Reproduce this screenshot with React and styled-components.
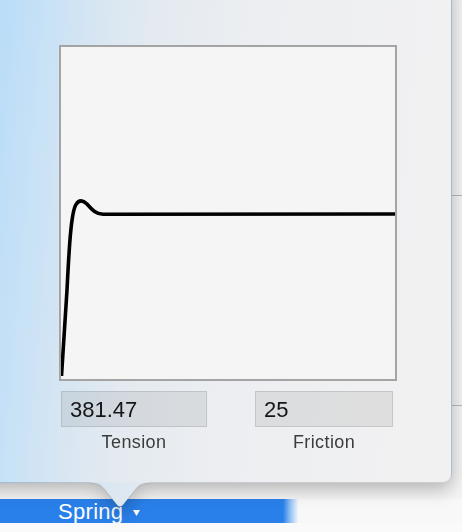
import React from "react";
import styled, { createGlobalStyle } from "styled-components";

const GlobalStyle = createGlobalStyle`
  html, body { margin: 0; padding: 0; }
  body { font-family: "Liberation Sans", Arial, sans-serif; background: #f6f6f6; }
`;

const Page = styled.div`
  position: relative;
  width: 462px;
  height: 532px;
  overflow: hidden;
  display: flex;
  flex-direction: column;
  background: #fafafa;
`;

const ListArea = styled.div`
  height: 499px;
  display: flex;
  flex-direction: column;
  background: #f4f4f4;
`;

const ListRow = styled.div`
  height: ${(p) => (p.$h ? `${p.$h}px` : "auto")};
  flex: ${(p) => (p.$h ? "0 0 auto" : "1")};
  border-bottom: ${(p) => (p.$line ? "1px solid #b9b9b9" : "none")};
  box-sizing: border-box;
`;

const BarRow = styled.div`
  height: 24px;
  display: flex;
  background: #f8f8f8;
`;

const ModeBar = styled.div`
  width: 298px;
  height: 24px;
  box-sizing: border-box;
  padding-left: 58px;
  display: flex;
  align-items: center;
  gap: 10px;
  overflow: hidden;
  background: linear-gradient(90deg, #2a80ea 0, #2a80ea 283px, #9cc6f5 291px, #f0f6fd 298px);
  color: #fff;
  font-size: 22px;
  line-height: 24px;
  letter-spacing: 0.3px;
`;

const ModeLabel = styled.span`
  display: block;
  height: 24px;
  line-height: 26px;
`;

const Caret = styled.svg`
  width: 7px;
  height: 6px;
  margin-top: 4px;
`;

const Footer = styled.div`
  flex: 1;
  background: #fafafa;
`;

const Popover = styled.div`
  position: absolute;
  left: -20px;
  top: -20px;
  width: 472px;
  height: 503px;
  filter: drop-shadow(0 6px 9px rgba(0, 0, 0, 0.27));
`;

const Panel = styled.div`
  width: 100%;
  height: 100%;
  box-sizing: border-box;
  border-radius: 9px;
  border: 1px solid rgba(0, 0, 0, 0.14);
  background: linear-gradient(
    95deg,
    #b9dcf8 20px,
    #c9e2f6 72px,
    #d8e6f2 122px,
    #e3eaf0 172px,
    #eceef1 272px,
    #f1f1f2 472px
  );
  padding: 64px 0 0 78px;
  display: flex;
  flex-direction: column;
`;

const Arrow = styled.svg`
  position: absolute;
  left: 110px;
  top: 502px;
  width: 60px;
  height: 27px;
  overflow: visible;
`;

const ChartBox = styled.div`
  width: 338px;
  height: 336px;
  box-sizing: border-box;
  border: 2px solid #a4a4a4;
  background: #f5f5f5;
`;

const Chart = styled.svg`
  display: block;
  width: 334px;
  height: 332px;
`;

const Fields = styled.div`
  display: flex;
  gap: 48px;
  margin-top: 10px;
  padding-left: 2px;
`;

const Field = styled.div`
  width: ${(p) => p.$w}px;
  display: flex;
  flex-direction: column;
  align-items: center;
`;

const ValueBox = styled.div`
  width: 100%;
  height: 36px;
  box-sizing: border-box;
  border: 1px solid rgba(0, 0, 0, 0.1);
  background: rgba(100, 100, 100, 0.13);
  padding-left: 8px;
  font-size: 22px;
  line-height: 36px;
  color: #151515;
`;

const FieldLabel = styled.div`
  margin-top: 4px;
  font-size: 18px;
  line-height: 22px;
  letter-spacing: 0.4px;
  color: #3c3c3c;
`;

const curve =
  "M61.5 376 L67 290 C69 250 71 212 76 204.5 C79 199.5 83 200 87 204 C91 208.5 95 214 103 214.3 L395 214";

export default function App() {
  return (
    <>
      <GlobalStyle />
      <Page>
        <ListArea>
          <ListRow $h={196} $line />
          <ListRow $h={210} $line />
          <ListRow />
        </ListArea>
        <BarRow>
          <ModeBar>
            <ModeLabel>Spring</ModeLabel>
            <Caret viewBox="0 0 7 6">
              <path d="M0 0 H7 L3.5 6 Z" fill="#fff" />
            </Caret>
          </ModeBar>
        </BarRow>
        <Footer />
        <Popover>
          <Panel>
            <ChartBox>
              <Chart viewBox="61 47 334 332">
                <path d={curve} fill="none" stroke="#000" strokeWidth="3.6" strokeLinejoin="round" />
              </Chart>
            </ChartBox>
            <Fields>
              <Field $w={146}>
                <ValueBox>381.47</ValueBox>
                <FieldLabel>Tension</FieldLabel>
              </Field>
              <Field $w={138}>
                <ValueBox>25</ValueBox>
                <FieldLabel>Friction</FieldLabel>
              </Field>
            </Fields>
          </Panel>
          <Arrow viewBox="0 0 60 27">
            <defs>
              <linearGradient id="arrowFill" x1="0" y1="0" x2="1" y2="0">
                <stop offset="0" stopColor="#d7e5f2" />
                <stop offset="1" stopColor="#e3eaf0" />
              </linearGradient>
            </defs>
            <path
              d="M0 1 C8 1 11 3 15 8 L27 23 Q30 26.5 33 23 L45 8 C49 3 52 1 60 1 L60 0 L0 0 Z"
              fill="url(#arrowFill)"
            />
            <path
              d="M0 1 C8 1 11 3 15 8 L27 23 Q30 26.5 33 23 L45 8 C49 3 52 1 60 1"
              fill="none"
              stroke="rgba(0,0,0,0.13)"
              strokeWidth="1"
            />
          </Arrow>
        </Popover>
      </Page>
    </>
  );
}
